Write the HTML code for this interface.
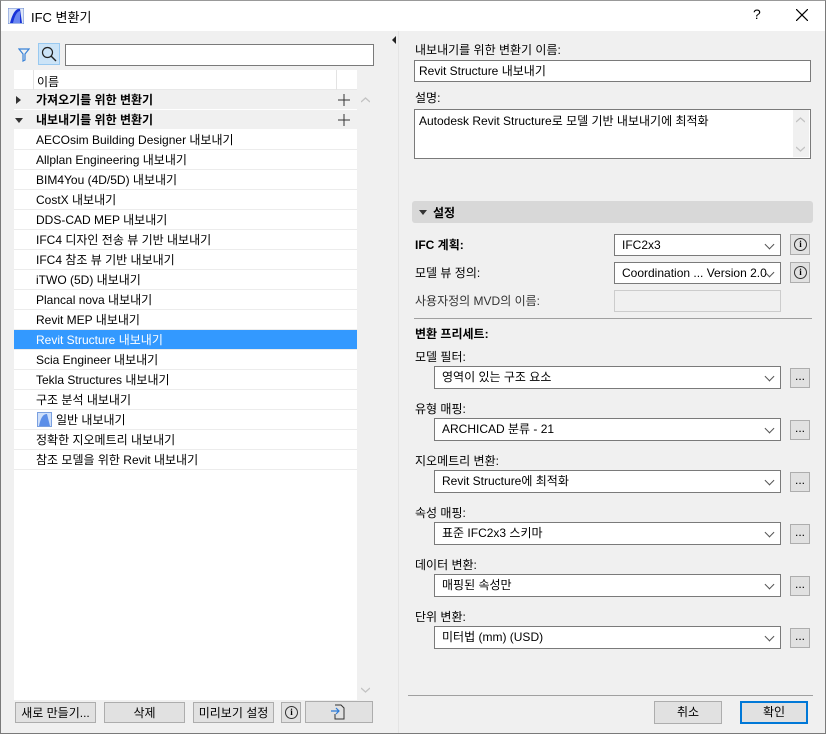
<!DOCTYPE html>
<html><head><meta charset="utf-8"><style>
*{box-sizing:border-box;margin:0;padding:0}
body{width:826px;height:734px;overflow:hidden;background:#f0f0f0;font-family:"Liberation Sans","Noto Sans CJK KR",sans-serif;font-size:12px;color:#000;position:relative}
.a{position:absolute}
.win{left:0;top:0;width:826px;height:734px;border:1px solid #7a7a7a;border-top-color:#999}
.title{left:1px;top:1px;width:824px;height:30px;background:#fff}
.inp{background:#fff;border:1px solid #7a7a7a}
.row{position:absolute;left:14px;width:343px;height:20px;border-bottom:1px solid #ececec;background:#fff;padding-left:22px;line-height:20px;white-space:nowrap}
.grp{background:#f0f0f0;font-weight:bold;border-bottom:1px solid #fff}
.sel{background:#fff;border:1px solid #7a7a7a;padding-left:7px;line-height:21px;white-space:nowrap}
.sel:after{content:"";position:absolute;right:7px;top:6px;width:6px;height:6px;border-right:1px solid #555;border-bottom:1px solid #555;transform:rotate(45deg)}
.btn{background:#e1e1e1;border:1px solid #adadad;text-align:center;line-height:20px}
.ib{background:#e1e1e1;border:1px solid #adadad}
.info{width:13px;height:13px;border:1.3px solid #333;border-radius:50%;position:absolute;left:3px;top:3px;text-align:center;font-size:9px;line-height:11px;font-weight:bold;font-family:"Liberation Serif",serif}
.lbl{white-space:nowrap}
</style></head><body>
<div class="a win"></div>
<div class="a title"></div>
<svg class="a" style="left:8px;top:8px" width="16" height="16"><rect x="0" y="0" width="16" height="16" fill="#dde6f7" stroke="#6a8ad0"/><path d="M2 15 C5 3 9 0 12 1 L14 15 Z" fill="#1833d8"/><path d="M5 15 C7 6 10 3 12 3 L12 15Z" fill="#6a86f0"/></svg>
<div class="a" style="left:31px;top:7px;font-size:13px">IFC 변환기</div>
<div class="a" style="left:753px;top:6px;font-size:14px">?</div>
<svg class="a" style="left:796px;top:9px" width="12" height="12"><path d="M0 0L12 12M12 0L0 12" stroke="#000" stroke-width="1.2"/></svg>

<svg class="a" style="left:18px;top:48px" width="12" height="14"><path d="M1 1H11L7 6V12L5 13V6Z" fill="none" stroke="#3b84d8" stroke-width="1.2"/></svg>
<div class="a" style="left:38px;top:43px;width:22px;height:22px;background:#cce4f7;border:1px solid #99c9f0"></div>
<svg class="a" style="left:41px;top:46px" width="16" height="16"><circle cx="6.5" cy="6.5" r="5" fill="none" stroke="#222" stroke-width="1.2"/><path d="M10 10L15 15" stroke="#222" stroke-width="1.4"/></svg>
<div class="a inp" style="left:65px;top:44px;width:309px;height:22px"></div>

<div class="a" style="left:14px;top:70px;width:343px;height:20px;background:#fff;border-bottom:1px solid #e8e8e8"></div>
<div class="a" style="left:33px;top:70px;width:1px;height:20px;background:#e3e3e3"></div>
<div class="a" style="left:336px;top:70px;width:1px;height:20px;background:#e3e3e3"></div>
<div class="a" style="left:37px;top:73px">이름</div>
<div class="a" style="left:14px;top:90px;width:343px;height:610px;background:#fff"></div>

<div class="row grp" style="top:90px">가져오기를 위한 변환기</div>
<div class="row grp" style="top:110px">내보내기를 위한 변환기</div>
<svg class="a" style="left:16px;top:96px" width="6" height="8"><path d="M0 0L5 4L0 8Z" fill="#333"/></svg>
<svg class="a" style="left:15px;top:118px" width="8" height="5"><path d="M0 0H8L4 5Z" fill="#333"/></svg>
<svg class="a" style="left:338px;top:94px" width="12" height="12"><path d="M6 0V12M0 6H12" stroke="#333"/></svg>
<svg class="a" style="left:338px;top:114px" width="12" height="12"><path d="M6 0V12M0 6H12" stroke="#333"/></svg>

<div class="row" style="top:130px">AECOsim Building Designer 내보내기</div>
<div class="row" style="top:150px">Allplan Engineering 내보내기</div>
<div class="row" style="top:170px">BIM4You (4D/5D) 내보내기</div>
<div class="row" style="top:190px">CostX 내보내기</div>
<div class="row" style="top:210px">DDS-CAD MEP 내보내기</div>
<div class="row" style="top:230px">IFC4 디자인 전송 뷰 기반 내보내기</div>
<div class="row" style="top:250px">IFC4 참조 뷰 기반 내보내기</div>
<div class="row" style="top:270px">iTWO (5D) 내보내기</div>
<div class="row" style="top:290px">Plancal nova 내보내기</div>
<div class="row" style="top:310px">Revit MEP 내보내기</div>
<div class="row" style="top:330px;background:#3399ff;color:#fff">Revit Structure 내보내기</div>
<div class="row" style="top:350px">Scia Engineer 내보내기</div>
<div class="row" style="top:370px">Tekla Structures 내보내기</div>
<div class="row" style="top:390px">구조 분석 내보내기</div>
<div class="row" style="top:410px;padding-left:42px">일반 내보내기</div>
<svg class="a" style="left:37px;top:412px" width="15" height="15"><rect x="0.5" y="0.5" width="14" height="14" fill="#cfe0fa" stroke="#7aa0e0"/><path d="M2 14C4 4 7 2 10 2L13 14" fill="#5b8ee8"/></svg>
<div class="row" style="top:430px">정확한 지오메트리 내보내기</div>
<div class="row" style="top:450px">참조 모델을 위한 Revit 내보내기</div>
<svg class="a" style="left:361px;top:97px" width="9" height="6"><path d="M0 5L4.5 1L9 5" fill="none" stroke="#c3c3c3" stroke-width="1.3"/></svg>
<svg class="a" style="left:361px;top:687px" width="9" height="6"><path d="M0 1L4.5 5L9 1" fill="none" stroke="#c3c3c3" stroke-width="1.3"/></svg>

<div class="a btn" style="left:15px;top:702px;width:81px;height:21px">새로 만들기...</div>
<div class="a btn" style="left:104px;top:702px;width:81px;height:21px">삭제</div>
<div class="a btn" style="left:193px;top:702px;width:81px;height:21px">미리보기 설정</div>
<div class="a ib" style="left:281px;top:702px;width:20px;height:21px"><div class="info" style="top:3px">i</div></div>
<div class="a btn" style="left:305px;top:701px;width:68px;height:22px"></div>
<svg class="a" style="left:331px;top:704px" width="14" height="16"><path d="M4 1H10L13 4V15H4V10" fill="none" stroke="#333"/><path d="M0 7H8M5 4L8 7L5 10" fill="none" stroke="#2a7ad8" stroke-width="1.2"/></svg>

<svg class="a" style="left:392px;top:36px" width="5" height="8"><path d="M4 0L0 4L4 8Z" fill="#222"/></svg>
<div class="a" style="left:398px;top:31px;width:1px;height:702px;background:#e4e4e4"></div>

<div class="a lbl" style="left:415px;top:41px">내보내기를 위한 변환기 이름:</div>
<div class="a inp" style="left:414px;top:60px;width:397px;height:22px;padding-left:4px;line-height:20px">Revit Structure 내보내기</div>
<div class="a lbl" style="left:415px;top:89px">설명:</div>
<div class="a inp" style="left:414px;top:109px;width:397px;height:50px;padding:2px 4px">Autodesk Revit Structure로 모델 기반 내보내기에 최적화</div>
<div class="a" style="left:793px;top:110px;width:16px;height:47px;background:#f0f0f0"></div>
<svg class="a" style="left:796px;top:117px" width="9" height="6"><path d="M0 5L4.5 1L9 5" fill="none" stroke="#c3c3c3" stroke-width="1.3"/></svg>
<svg class="a" style="left:796px;top:146px" width="9" height="6"><path d="M0 1L4.5 5L9 1" fill="none" stroke="#c3c3c3" stroke-width="1.3"/></svg>

<div class="a" style="left:412px;top:201px;width:401px;height:22px;background:#d8d8d8;border-radius:3px"></div>
<svg class="a" style="left:419px;top:210px" width="8" height="5"><path d="M0 0H8L4 5Z" fill="#333"/></svg>
<div class="a" style="left:433px;top:204px;font-weight:bold">설정</div>

<div class="a lbl" style="left:415px;top:236px;font-weight:bold">IFC 계획:</div>
<div class="a sel" style="left:614px;top:234px;width:167px;height:22px">IFC2x3</div>
<div class="a ib" style="left:790px;top:234px;width:20px;height:21px"><div class="info">i</div></div>
<div class="a lbl" style="left:415px;top:264px">모델 뷰 정의:</div>
<div class="a sel" style="left:614px;top:262px;width:167px;height:22px">Coordination ... Version 2.0</div>
<div class="a ib" style="left:790px;top:262px;width:20px;height:21px"><div class="info">i</div></div>
<div class="a lbl" style="left:415px;top:292px;color:#333">사용자정의 MVD의 이름:</div>
<div class="a" style="left:614px;top:290px;width:167px;height:22px;background:#f0f0f0;border:1px solid #ccc"></div>
<div class="a" style="left:414px;top:318px;width:398px;height:1px;background:#a0a0a0"></div>
<div class="a lbl" style="left:415px;top:325px;font-weight:bold">변환 프리세트:</div>

<div class="a lbl" style="left:415px;top:348px">모델 필터:</div>
<div class="a sel" style="left:434px;top:366px;width:347px;height:23px">영역이 있는 구조 요소</div>
<div class="a btn" style="left:790px;top:368px;width:20px;height:20px;line-height:14px">...</div>
<div class="a lbl" style="left:415px;top:400px">유형 매핑:</div>
<div class="a sel" style="left:434px;top:418px;width:347px;height:23px">ARCHICAD 분류 - 21</div>
<div class="a btn" style="left:790px;top:420px;width:20px;height:20px;line-height:14px">...</div>
<div class="a lbl" style="left:415px;top:452px">지오메트리 변환:</div>
<div class="a sel" style="left:434px;top:470px;width:347px;height:23px">Revit Structure에 최적화</div>
<div class="a btn" style="left:790px;top:472px;width:20px;height:20px;line-height:14px">...</div>
<div class="a lbl" style="left:415px;top:504px">속성 매핑:</div>
<div class="a sel" style="left:434px;top:522px;width:347px;height:23px">표준 IFC2x3 스키마</div>
<div class="a btn" style="left:790px;top:524px;width:20px;height:20px;line-height:14px">...</div>
<div class="a lbl" style="left:415px;top:556px">데이터 변환:</div>
<div class="a sel" style="left:434px;top:574px;width:347px;height:23px">매핑된 속성만</div>
<div class="a btn" style="left:790px;top:576px;width:20px;height:20px;line-height:14px">...</div>
<div class="a lbl" style="left:415px;top:608px">단위 변환:</div>
<div class="a sel" style="left:434px;top:626px;width:347px;height:23px">미터법 (mm) (USD)</div>
<div class="a btn" style="left:790px;top:628px;width:20px;height:20px;line-height:14px">...</div>

<div class="a" style="left:408px;top:695px;width:405px;height:1px;background:#a0a0a0"></div>
<div class="a btn" style="left:654px;top:701px;width:68px;height:23px;line-height:21px">취소</div>
<div class="a btn" style="left:740px;top:701px;width:68px;height:23px;line-height:19px;border:2px solid #0078d7">확인</div>
</body></html>
